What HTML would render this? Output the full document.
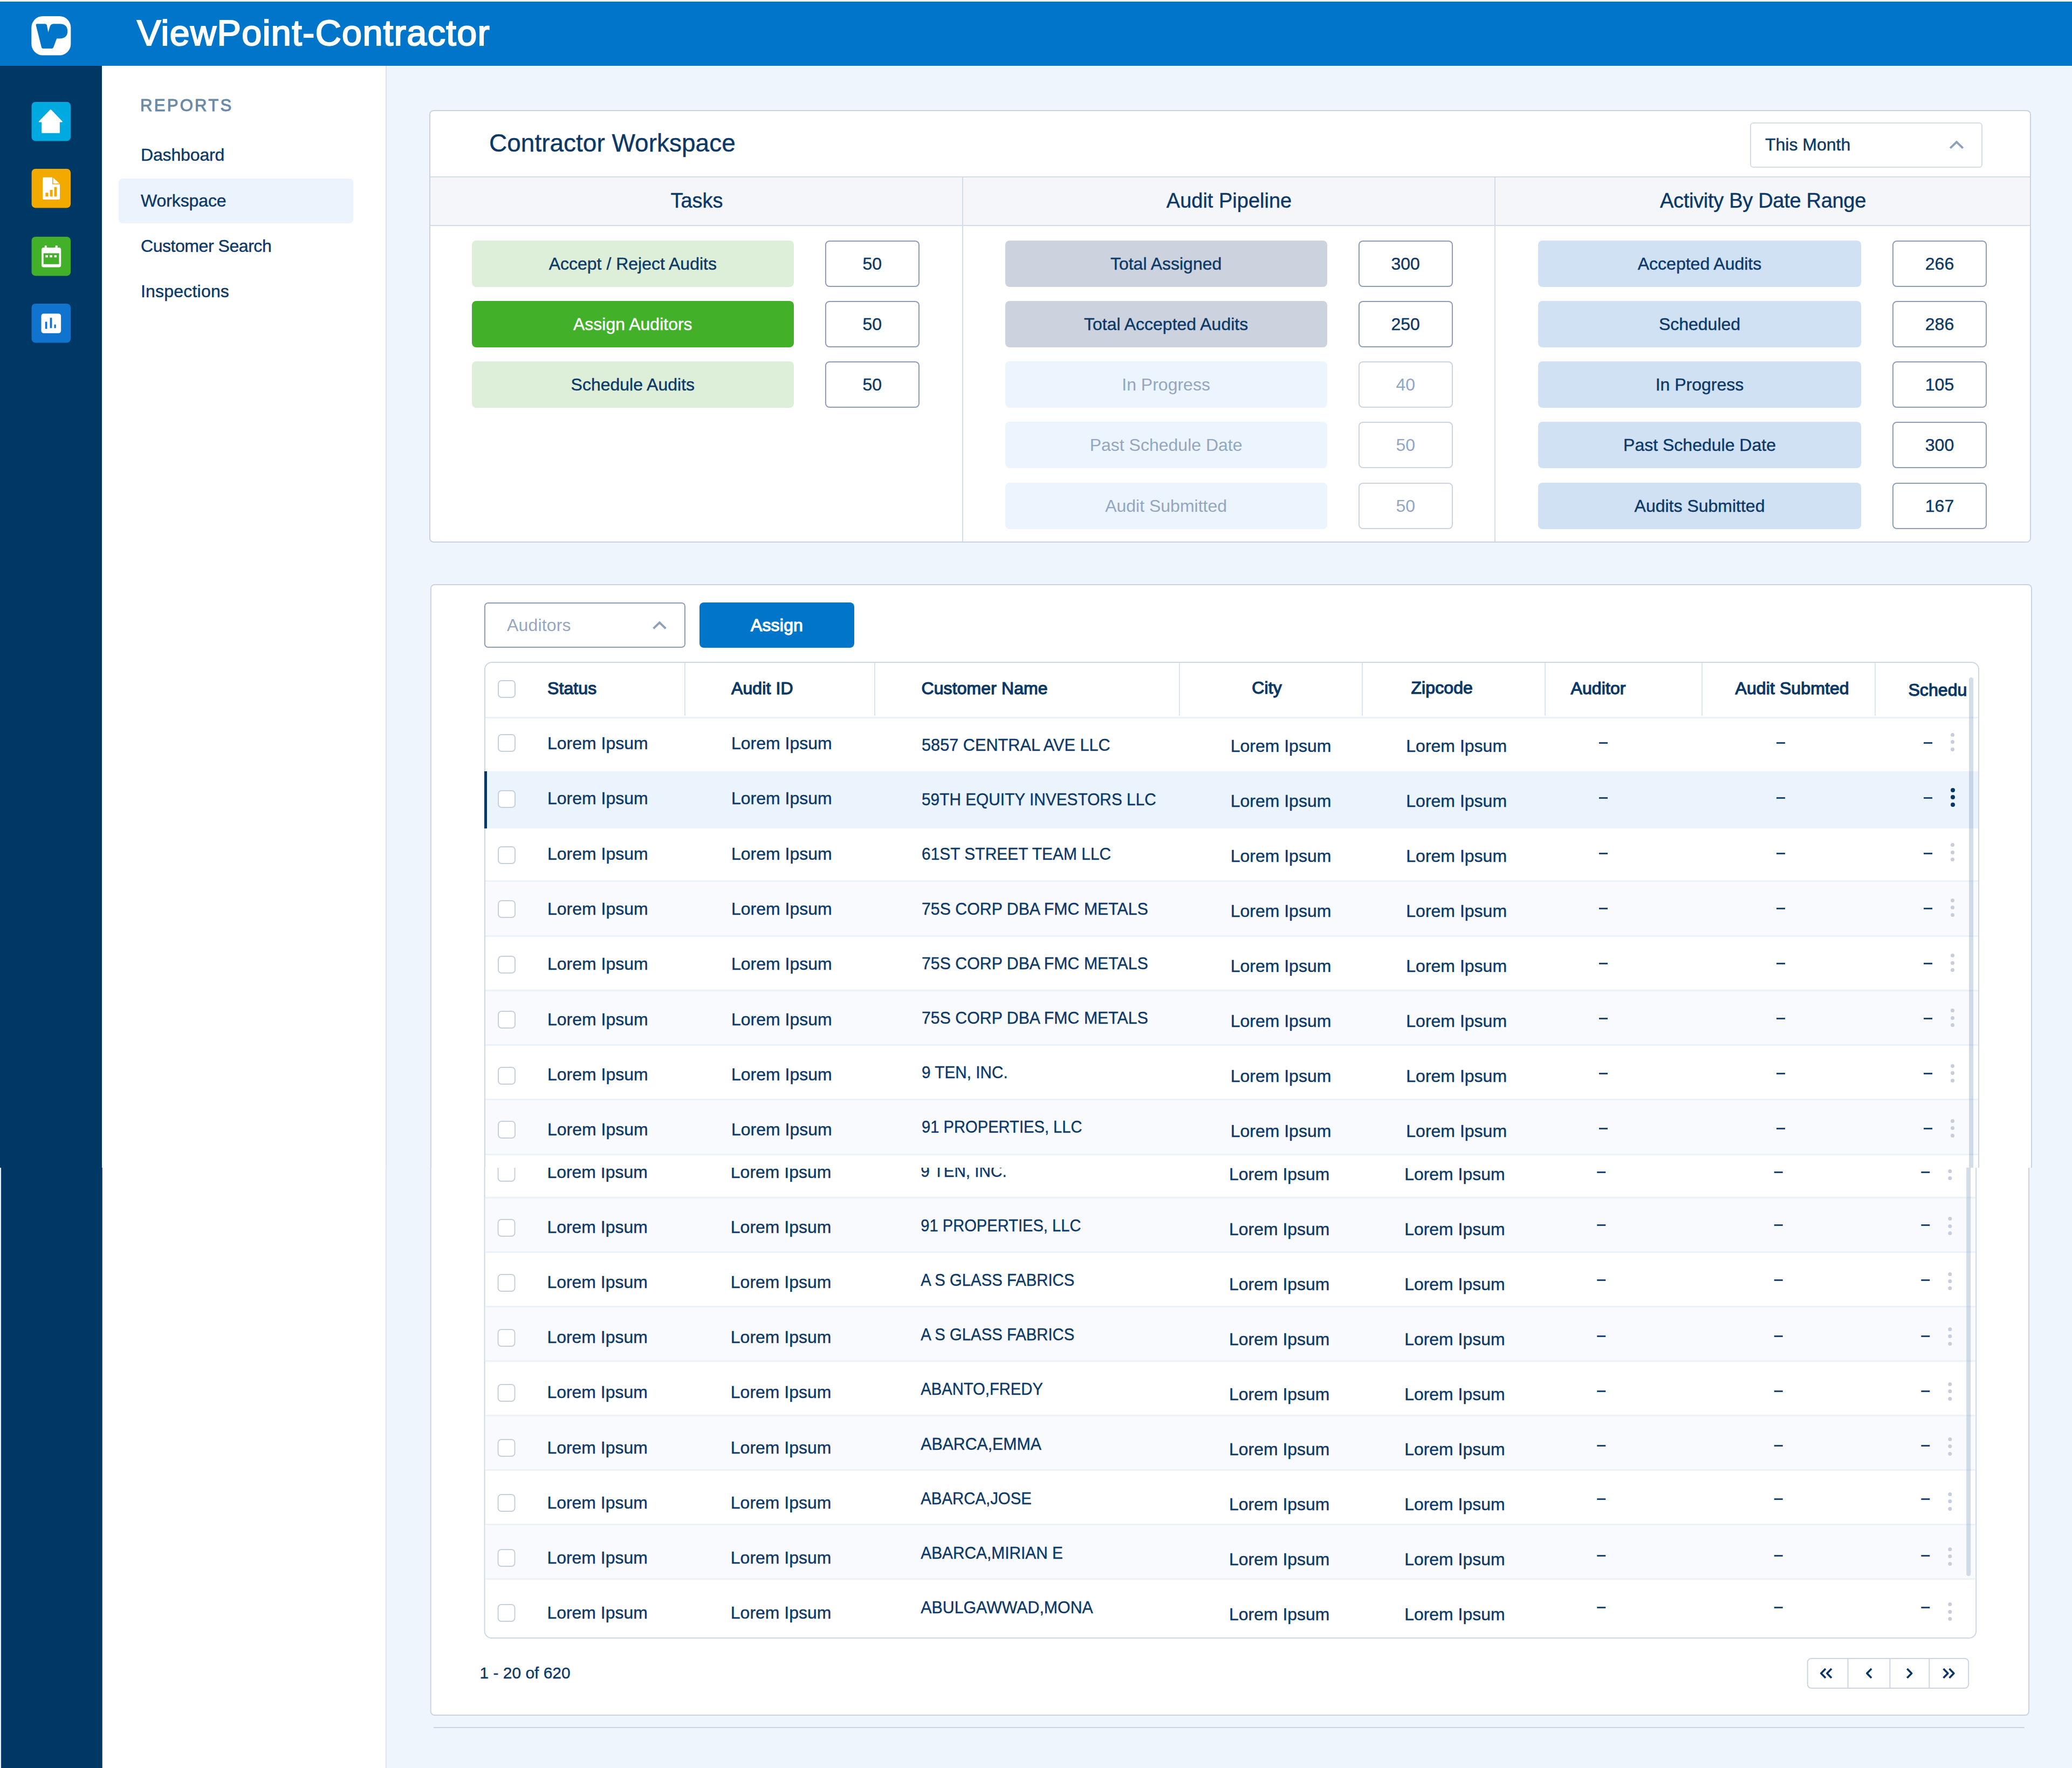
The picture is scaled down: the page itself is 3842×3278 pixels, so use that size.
<!DOCTYPE html>
<html lang="en"><head><meta charset="utf-8">
<title>ViewPoint-Contractor</title>
<style>
html,body{margin:0;padding:0;}
body{width:3842px;height:3278px;background:#eef5fd;font-family:"Liberation Sans",sans-serif;color:#0b3866;}
#root{position:relative;left:0;top:0;width:3842px;height:3278px;overflow:hidden;background:#eef5fd;}
div,svg{position:absolute;box-sizing:border-box;}
.t{white-space:nowrap;-webkit-text-stroke:0.4px;}
.sec{left:0;width:3842px;overflow:hidden;}
.card{background:#fff;border:2px solid #c9d4e0;border-radius:8px;}
.btn{-webkit-text-stroke:0.4px;border-radius:8px;font-size:32px;text-align:center;line-height:86px;height:86px;white-space:nowrap;}
.num{-webkit-text-stroke:0.4px;border:2px solid #8c9dba;border-radius:8px;background:#fff;font-size:32px;text-align:center;line-height:82px;height:86px;white-space:nowrap;}
.num.f{border-color:#ccd4e1;color:#93a6bf;-webkit-text-stroke:0;}
.cb{width:33px;height:33px;border:2px solid #c6cfdc;border-radius:7px;background:#fff;}
.sep{width:2px;background:#d9e6f5;}
.rl{height:3px;background:#ebf2fa;}
.dash{width:16px;height:3px;background:#1d4674;}
.kb{width:8px;height:8px;border-radius:50%;background:#c6cddb;}
.kb.d{background:#0b3663;}
</style></head><body><div id="root">

<div class="sec" style="top:0;height:2165px;">
<div style="left:0px;top:0px;width:3842px;height:3px;background:#f4eef1;"></div>
<div style="left:0px;top:3px;width:3842px;height:119px;background:#0075c9;"></div>
<div style="left:0px;top:122px;width:189px;height:2043px;background:#003865;"></div>
<div style="left:189px;top:122px;width:528px;height:2043px;background:#fff;border-right:2px solid #dbe4ef;"></div>
<svg style="left:58px;top:30px;" width="74" height="73" viewBox="58 30 74 73">
<rect x="58.3" y="30" width="73" height="72.5" rx="21" ry="21" fill="#fff"/>
<path fill="#0075c9" d="M66.8 47.2 Q66 44.2 69.2 44.2 L83.6 44.2 Q86.3 44.2 86.9 46.8 L89.4 60 L92.6 49 Q94.2 44.2 99.5 44.2 L110.5 44.2 Q125.2 44.2 125.2 57.8 Q125.2 71.4 110.5 71.4 L105.2 71.4 L99.3 87.2 Q98.3 90 95.3 90 L80.3 90 Q77.6 90 76.8 87.2 Z"/>
</svg>
<div class="t" style="top:20.5px;line-height:80px;height:80px;font-size:66.5px;color:#fff;left:254px;letter-spacing:1.4px;-webkit-text-stroke:2.2px #fff;">ViewPoint-Contractor</div>
<svg style="left:58px;top:189px;" width="74" height="73" viewBox="0 0 74 73"><rect x="0.6" y="0" width="72.4" height="72.4" rx="7" fill="#00a9e0"/><path fill="#fff" d="M36 14.6 L57 36.6 L52 36.6 L52 57 L19.9 57 L19.9 36.6 L14.6 36.6 Z" stroke="#fff" stroke-width="1.6" stroke-linejoin="round"/></svg>
<svg style="left:58px;top:313px;" width="74" height="73" viewBox="0 0 74 73"><rect x="0.6" y="0" width="72.4" height="72.4" rx="7" fill="#f2a900"/><path fill="#fff" d="M23 15.7 L39 15.7 L39 28.7 L53 28.7 L53 55 Q53 57 51 57 L23 57 Q21.2 57 21.2 55 L21.2 17.7 Q21.2 15.7 23 15.7 Z"/><path fill="#fff" d="M40.6 16.4 L52.3 27.2 L40.6 27.2 Z"/><rect x="26.4" y="44.4" width="5.1" height="7" fill="#f2a900"/><rect x="34.6" y="39.1" width="5" height="12.3" fill="#f2a900"/><rect x="42.5" y="33.9" width="4.9" height="17.5" fill="#f2a900"/></svg>
<svg style="left:58px;top:439px;" width="74" height="73" viewBox="0 0 74 73"><rect x="0.6" y="0" width="72.4" height="72.4" rx="7" fill="#43b02a"/><rect x="19" y="20" width="36.2" height="36.4" rx="4" fill="#fff"/><rect x="24.8" y="16.3" width="3.8" height="7" rx="1" fill="#fff"/><rect x="44.6" y="16.3" width="4.2" height="7" rx="1" fill="#fff"/><rect x="22.7" y="30.5" width="28.8" height="20.3" fill="#43b02a"/><rect x="26.4" y="34" width="4.6" height="4.2" fill="#fff"/><rect x="34.2" y="34" width="4.6" height="4.2" fill="#fff"/><rect x="42.5" y="34" width="4.6" height="4.2" fill="#fff"/></svg>
<svg style="left:58px;top:563px;" width="74" height="73" viewBox="0 0 74 73"><rect x="0.6" y="0" width="72.4" height="72.4" rx="7" fill="#1074cf"/><rect x="18.5" y="18.4" width="36.6" height="36.4" rx="4.5" fill="#fff"/><rect x="25.8" y="33.5" width="3.6" height="13.2" fill="#1074cf"/><rect x="34.6" y="26.2" width="3.8" height="19.2" fill="#1074cf"/><rect x="42.5" y="38.7" width="3.2" height="6.7" fill="#1074cf"/></svg>
<div class="t" style="top:173.5px;line-height:44px;height:44px;font-size:31px;color:#6989a7;left:260px;letter-spacing:3.3px;-webkit-text-stroke:1px #6989a7;">REPORTS</div>
<div style="left:220px;top:331px;width:435px;height:83px;background:#ebf3fc;border-radius:7px;"></div>
<div class="t" style="top:265.2px;line-height:44px;height:44px;font-size:32px;left:261px;letter-spacing:-0.15px;">Dashboard</div>
<div class="t" style="top:349.7px;line-height:44px;height:44px;font-size:32px;left:261px;letter-spacing:-0.1px;">Workspace</div>
<div class="t" style="top:433.7px;line-height:44px;height:44px;font-size:32px;left:261px;letter-spacing:-0.45px;">Customer Search</div>
<div class="t" style="top:517.6px;line-height:44px;height:44px;font-size:32px;left:261px;letter-spacing:0.2px;">Inspections</div>
<div class="card" style="left:796px;top:204px;width:2970px;height:802px;"></div>
<div style="left:798px;top:327px;width:2966px;height:92px;background:#f4f6fa;border-top:2px solid #d4dce6;border-bottom:2px solid #d4dce6;"></div>
<div style="left:1784px;top:328px;width:2px;height:676px;background:#d4dce6;"></div>
<div style="left:2771px;top:328px;width:2px;height:676px;background:#d4dce6;"></div>
<div class="t" style="top:235px;line-height:60px;height:60px;font-size:46px;left:907px;letter-spacing:0px;">Contractor Workspace</div>
<div style="left:3245px;top:227px;width:431px;height:84px;border:2px solid #d5dde8;border-radius:6px;background:#fff;"></div>
<div class="t" style="top:246px;line-height:44px;height:44px;font-size:32px;left:3273px;">This Month</div>
<svg style="left:3611px;top:257px;" width="34" height="22" viewBox="0 0 34 22"><path d="M5.2 17.6 L17 6.3 L28.8 17.6" fill="none" stroke="#8fa0b8" stroke-width="4"/></svg>
<div class="t" style="top:347px;line-height:50px;height:50px;font-size:38px;left:892px;width:800px;text-align:center;letter-spacing:0px;">Tasks</div>
<div class="t" style="top:347px;line-height:50px;height:50px;font-size:38px;left:1879px;width:800px;text-align:center;letter-spacing:0px;">Audit Pipeline</div>
<div class="t" style="top:347px;line-height:50px;height:50px;font-size:38px;left:2869px;width:800px;text-align:center;letter-spacing:-0.3px;">Activity By Date Range</div>
<div class="btn" style="left:874.8px;top:445.5px;width:597px;height:86px;background:#ddefd8;">Accept / Reject Audits</div>
<div class="num" style="left:1529.8px;top:445.5px;width:175px;height:86px;">50</div>
<div class="btn" style="left:874.8px;top:557.7px;width:597px;height:86px;background:#43b02a;color:#fff;">Assign Auditors</div>
<div class="num" style="left:1529.8px;top:557.7px;width:175px;height:86px;">50</div>
<div class="btn" style="left:874.8px;top:669.8px;width:597px;height:86px;background:#ddefd8;">Schedule Audits</div>
<div class="num" style="left:1529.8px;top:669.8px;width:175px;height:86px;">50</div>
<div class="btn" style="left:1863.6px;top:445.5px;width:597px;height:86px;background:#ccd3df;">Total Assigned</div>
<div class="num" style="left:2518.7px;top:445.5px;width:175px;height:86px;">300</div>
<div class="btn" style="left:1863.6px;top:557.7px;width:597px;height:86px;background:#ccd3df;">Total Accepted Audits</div>
<div class="num" style="left:2518.7px;top:557.7px;width:175px;height:86px;">250</div>
<div class="btn" style="left:1863.6px;top:669.8px;width:597px;height:86px;background:#ecf4fd;color:#93a6bf;-webkit-text-stroke:0;">In Progress</div>
<div class="num f" style="left:2518.7px;top:669.8px;width:175px;height:86px;">40</div>
<div class="btn" style="left:1863.6px;top:782.2px;width:597px;height:86px;background:#ecf4fd;color:#93a6bf;-webkit-text-stroke:0;">Past Schedule Date</div>
<div class="num f" style="left:2518.7px;top:782.2px;width:175px;height:86px;">50</div>
<div class="btn" style="left:1863.6px;top:894.6px;width:597px;height:86px;background:#ecf4fd;color:#93a6bf;-webkit-text-stroke:0;">Audit Submitted</div>
<div class="num f" style="left:2518.7px;top:894.6px;width:175px;height:86px;">50</div>
<div class="btn" style="left:2852px;top:445.5px;width:599px;height:86px;background:#d0e1f4;">Accepted Audits</div>
<div class="num" style="left:3509px;top:445.5px;width:175px;height:86px;">266</div>
<div class="btn" style="left:2852px;top:557.7px;width:599px;height:86px;background:#d0e1f4;">Scheduled</div>
<div class="num" style="left:3509px;top:557.7px;width:175px;height:86px;">286</div>
<div class="btn" style="left:2852px;top:669.8px;width:599px;height:86px;background:#d0e1f4;">In Progress</div>
<div class="num" style="left:3509px;top:669.8px;width:175px;height:86px;">105</div>
<div class="btn" style="left:2852px;top:782.2px;width:599px;height:86px;background:#d0e1f4;">Past Schedule Date</div>
<div class="num" style="left:3509px;top:782.2px;width:175px;height:86px;">300</div>
<div class="btn" style="left:2852px;top:894.6px;width:599px;height:86px;background:#d0e1f4;">Audits Submitted</div>
<div class="num" style="left:3509px;top:894.6px;width:175px;height:86px;">167</div>
<div class="card" style="left:798px;top:1083px;width:2970px;height:1400px;"></div>
<div style="left:898px;top:1117px;width:373px;height:84px;border:2px solid #8c9dba;border-radius:7px;background:#fff;"></div>
<div class="t" style="top:1136.5px;line-height:44px;height:44px;font-size:32px;color:#95a7c0;left:940px;-webkit-text-stroke:0;letter-spacing:0.15px;">Auditors</div>
<svg style="left:1206px;top:1148px;" width="34" height="22" viewBox="0 0 34 22"><path d="M5.6 17.4 L17 6.4 L28.4 17.4" fill="none" stroke="#8fa0b8" stroke-width="4"/></svg>
<div style="left:1297px;top:1116.5px;width:287px;height:84px;background:#0075c9;border-radius:8px;color:#fff;font-size:32px;letter-spacing:0.2px;-webkit-text-stroke:1.25px #fff;text-align:center;line-height:84px;">Assign</div>
<div style="left:898px;top:1226.5px;width:2772px;height:1900px;border:2px solid #cdd8e5;border-radius:14px;background:#fff;"></div>
<div class="cb" style="left:923px;top:1260.5px;width:33px;height:33px;"></div>
<div class="t" style="top:1253.5px;line-height:44px;height:44px;font-size:32px;left:1015px;letter-spacing:0.1px;-webkit-text-stroke:1.25px;">Status</div>
<div class="t" style="top:1253.5px;line-height:44px;height:44px;font-size:32px;left:1356px;letter-spacing:0.1px;-webkit-text-stroke:1.25px;">Audit ID</div>
<div class="t" style="top:1253.5px;line-height:44px;height:44px;font-size:32px;left:1708.5px;letter-spacing:0.1px;-webkit-text-stroke:1.25px;">Customer Name</div>
<div class="t" style="top:1252.5px;line-height:44px;height:44px;font-size:32px;left:2199px;width:300px;text-align:center;letter-spacing:0.1px;-webkit-text-stroke:1.25px;">City</div>
<div class="t" style="top:1252.5px;line-height:44px;height:44px;font-size:32px;left:2523.7px;width:300px;text-align:center;letter-spacing:0.1px;-webkit-text-stroke:1.25px;">Zipcode</div>
<div class="t" style="top:1253.5px;line-height:44px;height:44px;font-size:32px;left:2912.5px;letter-spacing:0.1px;-webkit-text-stroke:1.25px;">Auditor</div>
<div class="t" style="top:1253.5px;line-height:44px;height:44px;font-size:32px;left:3217.5px;letter-spacing:0.1px;-webkit-text-stroke:1.25px;">Audit Submted</div>
<div class="t" style="top:1256.5px;line-height:44px;height:44px;font-size:32px;left:3538.4px;letter-spacing:0.1px;-webkit-text-stroke:1.25px;">Schedu</div>
<div class="sep" style="left:1269px;top:1228.5px;width:2px;height:98px;"></div>
<div class="sep" style="left:1620.5px;top:1228.5px;width:2px;height:98px;"></div>
<div class="sep" style="left:2185.7px;top:1228.5px;width:2px;height:98px;"></div>
<div class="sep" style="left:2525px;top:1228.5px;width:2px;height:98px;"></div>
<div class="sep" style="left:2864px;top:1228.5px;width:2px;height:98px;"></div>
<div class="sep" style="left:3154.7px;top:1228.5px;width:2px;height:98px;"></div>
<div class="sep" style="left:3475.6px;top:1228.5px;width:2px;height:98px;"></div>
<div class="rl" style="left:900px;top:1329px;width:2768px;height:3px;"></div>

<div class="rl" style="left:900px;top:1429.75px;width:2768px;height:3px;"></div>
<div style="left:900px;top:1429.75px;width:2768px;height:105.75px;background:#ebf3fc;"></div><div style="left:898px;top:1429.75px;width:4.5px;height:105.75px;background:#0b3663;"></div>

<div class="rl" style="left:900px;top:1632.25px;width:2768px;height:3px;"></div>
<div style="left:900px;top:1635.25px;width:2768px;height:98.25px;background:#f9fafd;"></div>
<div class="rl" style="left:900px;top:1733.5px;width:2768px;height:3px;"></div>

<div class="rl" style="left:900px;top:1834.75px;width:2768px;height:3px;"></div>
<div style="left:900px;top:1837.75px;width:2768px;height:98.25px;background:#f9fafd;"></div>
<div class="rl" style="left:900px;top:1936px;width:2768px;height:3px;"></div>

<div class="rl" style="left:900px;top:2037.25px;width:2768px;height:3px;"></div>
<div style="left:900px;top:2040.25px;width:2768px;height:98.25px;background:#f9fafd;"></div>
<div class="rl" style="left:900px;top:2138.5px;width:2768px;height:3px;"></div>
<div class="cb" style="left:923px;top:1360.7px;width:33px;height:33px;"></div><div class="t" style="top:1356px;line-height:44px;height:44px;font-size:32px;left:1015px;">Lorem Ipsum</div><div class="t" style="top:1356px;line-height:44px;height:44px;font-size:32px;left:1356px;">Lorem Ipsum</div><div class="t" style="top:1359px;line-height:44px;height:44px;font-size:32px;left:1708.5px;transform:scaleX(0.959);transform-origin:0 50%;">5857 CENTRAL AVE LLC</div><div class="t" style="top:1360.6px;line-height:44px;height:44px;font-size:32px;left:2175px;width:400px;text-align:center;">Lorem Ipsum</div><div class="t" style="top:1360.6px;line-height:44px;height:44px;font-size:32px;left:2500.7px;width:400px;text-align:center;">Lorem Ipsum</div><div class="dash" style="left:2965px;top:1376px;width:16px;height:3px;"></div><div class="dash" style="left:3294px;top:1376px;width:16px;height:3px;"></div><div class="dash" style="left:3567px;top:1376px;width:16px;height:3px;"></div><div class="kb" style="left:3617px;top:1359px;width:7.4px;height:7.4px;"></div><div class="kb" style="left:3617px;top:1372px;width:7.4px;height:7.4px;"></div><div class="kb" style="left:3617px;top:1386px;width:7.4px;height:7.4px;"></div>
<div class="cb" style="left:923px;top:1465px;width:33px;height:33px;"></div><div class="t" style="top:1458.3px;line-height:44px;height:44px;font-size:32px;left:1015px;">Lorem Ipsum</div><div class="t" style="top:1458.3px;line-height:44px;height:44px;font-size:32px;left:1356px;">Lorem Ipsum</div><div class="t" style="top:1460.2px;line-height:44px;height:44px;font-size:32px;left:1708.5px;transform:scaleX(0.932);transform-origin:0 50%;">59TH EQUITY INVESTORS LLC</div><div class="t" style="top:1462.7px;line-height:44px;height:44px;font-size:32px;left:2175px;width:400px;text-align:center;">Lorem Ipsum</div><div class="t" style="top:1462.7px;line-height:44px;height:44px;font-size:32px;left:2500.7px;width:400px;text-align:center;">Lorem Ipsum</div><div class="dash" style="left:2965px;top:1478px;width:16px;height:3px;"></div><div class="dash" style="left:3294px;top:1478px;width:16px;height:3px;"></div><div class="dash" style="left:3567px;top:1478px;width:16px;height:3px;"></div><div class="kb d" style="left:3617px;top:1461px;width:8px;height:8px;"></div><div class="kb d" style="left:3617px;top:1474px;width:8px;height:8px;"></div><div class="kb d" style="left:3617px;top:1488px;width:8px;height:8px;"></div>
<div class="cb" style="left:923px;top:1569.2px;width:33px;height:33px;"></div><div class="t" style="top:1560.6px;line-height:44px;height:44px;font-size:32px;left:1015px;">Lorem Ipsum</div><div class="t" style="top:1560.6px;line-height:44px;height:44px;font-size:32px;left:1356px;">Lorem Ipsum</div><div class="t" style="top:1561.4px;line-height:44px;height:44px;font-size:32px;left:1708.5px;transform:scaleX(0.936);transform-origin:0 50%;">61ST STREET TEAM LLC</div><div class="t" style="top:1564.8px;line-height:44px;height:44px;font-size:32px;left:2175px;width:400px;text-align:center;">Lorem Ipsum</div><div class="t" style="top:1564.8px;line-height:44px;height:44px;font-size:32px;left:2500.7px;width:400px;text-align:center;">Lorem Ipsum</div><div class="dash" style="left:2965px;top:1581px;width:16px;height:3px;"></div><div class="dash" style="left:3294px;top:1581px;width:16px;height:3px;"></div><div class="dash" style="left:3567px;top:1581px;width:16px;height:3px;"></div><div class="kb" style="left:3617px;top:1563px;width:7.4px;height:7.4px;"></div><div class="kb" style="left:3617px;top:1577px;width:7.4px;height:7.4px;"></div><div class="kb" style="left:3617px;top:1590px;width:7.4px;height:7.4px;"></div>
<div class="cb" style="left:923px;top:1669.4px;width:33px;height:33px;"></div><div class="t" style="top:1662.9px;line-height:44px;height:44px;font-size:32px;left:1015px;">Lorem Ipsum</div><div class="t" style="top:1662.9px;line-height:44px;height:44px;font-size:32px;left:1356px;">Lorem Ipsum</div><div class="t" style="top:1662.6px;line-height:44px;height:44px;font-size:32px;left:1708.5px;transform:scaleX(0.947);transform-origin:0 50%;">75S CORP DBA FMC METALS</div><div class="t" style="top:1666.9px;line-height:44px;height:44px;font-size:32px;left:2175px;width:400px;text-align:center;">Lorem Ipsum</div><div class="t" style="top:1666.9px;line-height:44px;height:44px;font-size:32px;left:2500.7px;width:400px;text-align:center;">Lorem Ipsum</div><div class="dash" style="left:2965px;top:1683px;width:16px;height:3px;"></div><div class="dash" style="left:3294px;top:1683px;width:16px;height:3px;"></div><div class="dash" style="left:3567px;top:1683px;width:16px;height:3px;"></div><div class="kb" style="left:3617px;top:1666px;width:7.4px;height:7.4px;"></div><div class="kb" style="left:3617px;top:1679px;width:7.4px;height:7.4px;"></div><div class="kb" style="left:3617px;top:1693px;width:7.4px;height:7.4px;"></div>
<div class="cb" style="left:923px;top:1771.9px;width:33px;height:33px;"></div><div class="t" style="top:1765.2px;line-height:44px;height:44px;font-size:32px;left:1015px;">Lorem Ipsum</div><div class="t" style="top:1765.2px;line-height:44px;height:44px;font-size:32px;left:1356px;">Lorem Ipsum</div><div class="t" style="top:1763.8px;line-height:44px;height:44px;font-size:32px;left:1708.5px;transform:scaleX(0.947);transform-origin:0 50%;">75S CORP DBA FMC METALS</div><div class="t" style="top:1769px;line-height:44px;height:44px;font-size:32px;left:2175px;width:400px;text-align:center;">Lorem Ipsum</div><div class="t" style="top:1769px;line-height:44px;height:44px;font-size:32px;left:2500.7px;width:400px;text-align:center;">Lorem Ipsum</div><div class="dash" style="left:2965px;top:1785px;width:16px;height:3px;"></div><div class="dash" style="left:3294px;top:1785px;width:16px;height:3px;"></div><div class="dash" style="left:3567px;top:1785px;width:16px;height:3px;"></div><div class="kb" style="left:3617px;top:1768px;width:7.4px;height:7.4px;"></div><div class="kb" style="left:3617px;top:1782px;width:7.4px;height:7.4px;"></div><div class="kb" style="left:3617px;top:1795px;width:7.4px;height:7.4px;"></div>
<div class="cb" style="left:923px;top:1873.9px;width:33px;height:33px;"></div><div class="t" style="top:1867.5px;line-height:44px;height:44px;font-size:32px;left:1015px;">Lorem Ipsum</div><div class="t" style="top:1867.5px;line-height:44px;height:44px;font-size:32px;left:1356px;">Lorem Ipsum</div><div class="t" style="top:1865px;line-height:44px;height:44px;font-size:32px;left:1708.5px;transform:scaleX(0.947);transform-origin:0 50%;">75S CORP DBA FMC METALS</div><div class="t" style="top:1871.1px;line-height:44px;height:44px;font-size:32px;left:2175px;width:400px;text-align:center;">Lorem Ipsum</div><div class="t" style="top:1871.1px;line-height:44px;height:44px;font-size:32px;left:2500.7px;width:400px;text-align:center;">Lorem Ipsum</div><div class="dash" style="left:2965px;top:1887px;width:16px;height:3px;"></div><div class="dash" style="left:3294px;top:1887px;width:16px;height:3px;"></div><div class="dash" style="left:3567px;top:1887px;width:16px;height:3px;"></div><div class="kb" style="left:3617px;top:1870px;width:7.4px;height:7.4px;"></div><div class="kb" style="left:3617px;top:1884px;width:7.4px;height:7.4px;"></div><div class="kb" style="left:3617px;top:1897px;width:7.4px;height:7.4px;"></div>
<div class="cb" style="left:923px;top:1978.1px;width:33px;height:33px;"></div><div class="t" style="top:1969.8px;line-height:44px;height:44px;font-size:32px;left:1015px;">Lorem Ipsum</div><div class="t" style="top:1969.8px;line-height:44px;height:44px;font-size:32px;left:1356px;">Lorem Ipsum</div><div class="t" style="top:1966.2px;line-height:44px;height:44px;font-size:32px;left:1708.5px;transform:scaleX(0.929);transform-origin:0 50%;">9 TEN, INC.</div><div class="t" style="top:1973.2px;line-height:44px;height:44px;font-size:32px;left:2175px;width:400px;text-align:center;">Lorem Ipsum</div><div class="t" style="top:1973.2px;line-height:44px;height:44px;font-size:32px;left:2500.7px;width:400px;text-align:center;">Lorem Ipsum</div><div class="dash" style="left:2965px;top:1989px;width:16px;height:3px;"></div><div class="dash" style="left:3294px;top:1989px;width:16px;height:3px;"></div><div class="dash" style="left:3567px;top:1989px;width:16px;height:3px;"></div><div class="kb" style="left:3617px;top:1973px;width:7.4px;height:7.4px;"></div><div class="kb" style="left:3617px;top:1986px;width:7.4px;height:7.4px;"></div><div class="kb" style="left:3617px;top:2000px;width:7.4px;height:7.4px;"></div>
<div class="cb" style="left:923px;top:2078.3px;width:33px;height:33px;"></div><div class="t" style="top:2072.1px;line-height:44px;height:44px;font-size:32px;left:1015px;">Lorem Ipsum</div><div class="t" style="top:2072.1px;line-height:44px;height:44px;font-size:32px;left:1356px;">Lorem Ipsum</div><div class="t" style="top:2067.4px;line-height:44px;height:44px;font-size:32px;left:1708.5px;transform:scaleX(0.911);transform-origin:0 50%;">91 PROPERTIES, LLC</div><div class="t" style="top:2075.3px;line-height:44px;height:44px;font-size:32px;left:2175px;width:400px;text-align:center;">Lorem Ipsum</div><div class="t" style="top:2075.3px;line-height:44px;height:44px;font-size:32px;left:2500.7px;width:400px;text-align:center;">Lorem Ipsum</div><div class="dash" style="left:2965px;top:2091px;width:16px;height:3px;"></div><div class="dash" style="left:3294px;top:2091px;width:16px;height:3px;"></div><div class="dash" style="left:3567px;top:2091px;width:16px;height:3px;"></div><div class="kb" style="left:3617px;top:2075px;width:7.4px;height:7.4px;"></div><div class="kb" style="left:3617px;top:2088px;width:7.4px;height:7.4px;"></div><div class="kb" style="left:3617px;top:2102px;width:7.4px;height:7.4px;"></div>
<div style="left:3650.9px;top:1255.5px;width:8.2px;height:1000px;background:rgba(140,165,195,.38);border-radius:4px;"></div>
</div>
<div class="sec" style="top:2165px;height:1113px;">
<div style="left:0;top:-2165px;width:3842px;height:3278px;transform-origin:638px 0;transform:scaleX(0.9984);">
<div style="left:-5px;top:2155px;width:195px;height:1200px;background:#003865;"></div>
<div style="left:-5px;top:2155px;width:5.9px;height:1200px;background:#e8eef5;"></div>
<div style="left:189px;top:2155px;width:528px;height:1200px;background:#fff;border-right:2px solid #dbe4ef;"></div>
<div class="card" style="left:798px;top:1083px;width:2970px;height:2098px;"></div>
<div style="left:898px;top:1226.5px;width:2772px;height:1811px;border:2px solid #cdd8e5;border-radius:14px;background:#fff;"></div>

<div class="rl" style="left:900px;top:2218.8px;width:2768px;height:3px;"></div>
<div style="left:900px;top:2221.8px;width:2768px;height:98px;background:#f9fafd;"></div>
<div class="rl" style="left:900px;top:2319.8px;width:2768px;height:3px;"></div>

<div class="rl" style="left:900px;top:2420.8px;width:2768px;height:3px;"></div>
<div style="left:900px;top:2423.8px;width:2768px;height:98px;background:#f9fafd;"></div>
<div class="rl" style="left:900px;top:2521.8px;width:2768px;height:3px;"></div>

<div class="rl" style="left:900px;top:2622.8px;width:2768px;height:3px;"></div>
<div style="left:900px;top:2625.8px;width:2768px;height:98px;background:#f9fafd;"></div>
<div class="rl" style="left:900px;top:2723.8px;width:2768px;height:3px;"></div>

<div class="rl" style="left:900px;top:2824.8px;width:2768px;height:3px;"></div>
<div style="left:900px;top:2827.8px;width:2768px;height:98px;background:#f9fafd;"></div>
<div class="rl" style="left:900px;top:2925.8px;width:2768px;height:3px;"></div>

<div class="cb" style="left:923px;top:2158px;width:33px;height:33px;"></div><div class="t" style="top:2151px;line-height:44px;height:44px;font-size:32px;left:1015px;">Lorem Ipsum</div><div class="t" style="top:2151px;line-height:44px;height:44px;font-size:32px;left:1356px;">Lorem Ipsum</div><div class="t" style="top:2149px;line-height:44px;height:44px;font-size:32px;left:1708.5px;transform:scaleX(0.929);transform-origin:0 50%;">9 TEN, INC.</div><div class="t" style="top:2154.6px;line-height:44px;height:44px;font-size:32px;left:2175px;width:400px;text-align:center;">Lorem Ipsum</div><div class="t" style="top:2154.6px;line-height:44px;height:44px;font-size:32px;left:2500.7px;width:400px;text-align:center;">Lorem Ipsum</div><div class="dash" style="left:2965px;top:2172px;width:16px;height:3px;"></div><div class="dash" style="left:3294px;top:2172px;width:16px;height:3px;"></div><div class="dash" style="left:3567px;top:2172px;width:16px;height:3px;"></div><div class="kb" style="left:3617px;top:2154px;width:7.4px;height:7.4px;"></div><div class="kb" style="left:3617px;top:2168px;width:7.4px;height:7.4px;"></div><div class="kb" style="left:3617px;top:2181px;width:7.4px;height:7.4px;"></div>
<div class="cb" style="left:923px;top:2260px;width:33px;height:33px;"></div><div class="t" style="top:2253.1px;line-height:44px;height:44px;font-size:32px;left:1015px;">Lorem Ipsum</div><div class="t" style="top:2253.1px;line-height:44px;height:44px;font-size:32px;left:1356px;">Lorem Ipsum</div><div class="t" style="top:2250.1px;line-height:44px;height:44px;font-size:32px;left:1708.5px;transform:scaleX(0.911);transform-origin:0 50%;">91 PROPERTIES, LLC</div><div class="t" style="top:2256.6px;line-height:44px;height:44px;font-size:32px;left:2175px;width:400px;text-align:center;">Lorem Ipsum</div><div class="t" style="top:2256.6px;line-height:44px;height:44px;font-size:32px;left:2500.7px;width:400px;text-align:center;">Lorem Ipsum</div><div class="dash" style="left:2965px;top:2270px;width:16px;height:3px;"></div><div class="dash" style="left:3294px;top:2270px;width:16px;height:3px;"></div><div class="dash" style="left:3567px;top:2270px;width:16px;height:3px;"></div><div class="kb" style="left:3617px;top:2256px;width:7.4px;height:7.4px;"></div><div class="kb" style="left:3617px;top:2270px;width:7.4px;height:7.4px;"></div><div class="kb" style="left:3617px;top:2283px;width:7.4px;height:7.4px;"></div>
<div class="cb" style="left:923px;top:2362px;width:33px;height:33px;"></div><div class="t" style="top:2355.2px;line-height:44px;height:44px;font-size:32px;left:1015px;">Lorem Ipsum</div><div class="t" style="top:2355.2px;line-height:44px;height:44px;font-size:32px;left:1356px;">Lorem Ipsum</div><div class="t" style="top:2351.2px;line-height:44px;height:44px;font-size:32px;left:1708.5px;transform:scaleX(0.917);transform-origin:0 50%;">A S GLASS FABRICS</div><div class="t" style="top:2358.6px;line-height:44px;height:44px;font-size:32px;left:2175px;width:400px;text-align:center;">Lorem Ipsum</div><div class="t" style="top:2358.6px;line-height:44px;height:44px;font-size:32px;left:2500.7px;width:400px;text-align:center;">Lorem Ipsum</div><div class="dash" style="left:2965px;top:2372px;width:16px;height:3px;"></div><div class="dash" style="left:3294px;top:2372px;width:16px;height:3px;"></div><div class="dash" style="left:3567px;top:2372px;width:16px;height:3px;"></div><div class="kb" style="left:3617px;top:2359px;width:7.4px;height:7.4px;"></div><div class="kb" style="left:3617px;top:2372px;width:7.4px;height:7.4px;"></div><div class="kb" style="left:3617px;top:2385px;width:7.4px;height:7.4px;"></div>
<div class="cb" style="left:923px;top:2464px;width:33px;height:33px;"></div><div class="t" style="top:2457.3px;line-height:44px;height:44px;font-size:32px;left:1015px;">Lorem Ipsum</div><div class="t" style="top:2457.3px;line-height:44px;height:44px;font-size:32px;left:1356px;">Lorem Ipsum</div><div class="t" style="top:2452.3px;line-height:44px;height:44px;font-size:32px;left:1708.5px;transform:scaleX(0.917);transform-origin:0 50%;">A S GLASS FABRICS</div><div class="t" style="top:2460.6px;line-height:44px;height:44px;font-size:32px;left:2175px;width:400px;text-align:center;">Lorem Ipsum</div><div class="t" style="top:2460.6px;line-height:44px;height:44px;font-size:32px;left:2500.7px;width:400px;text-align:center;">Lorem Ipsum</div><div class="dash" style="left:2965px;top:2476px;width:16px;height:3px;"></div><div class="dash" style="left:3294px;top:2476px;width:16px;height:3px;"></div><div class="dash" style="left:3567px;top:2476px;width:16px;height:3px;"></div><div class="kb" style="left:3617px;top:2461px;width:7.4px;height:7.4px;"></div><div class="kb" style="left:3617px;top:2474px;width:7.4px;height:7.4px;"></div><div class="kb" style="left:3617px;top:2488px;width:7.4px;height:7.4px;"></div>
<div class="cb" style="left:923px;top:2566px;width:33px;height:33px;"></div><div class="t" style="top:2559.4px;line-height:44px;height:44px;font-size:32px;left:1015px;">Lorem Ipsum</div><div class="t" style="top:2559.4px;line-height:44px;height:44px;font-size:32px;left:1356px;">Lorem Ipsum</div><div class="t" style="top:2553.4px;line-height:44px;height:44px;font-size:32px;left:1708.5px;transform:scaleX(0.914);transform-origin:0 50%;">ABANTO,FREDY</div><div class="t" style="top:2562.6px;line-height:44px;height:44px;font-size:32px;left:2175px;width:400px;text-align:center;">Lorem Ipsum</div><div class="t" style="top:2562.6px;line-height:44px;height:44px;font-size:32px;left:2500.7px;width:400px;text-align:center;">Lorem Ipsum</div><div class="dash" style="left:2965px;top:2578px;width:16px;height:3px;"></div><div class="dash" style="left:3294px;top:2578px;width:16px;height:3px;"></div><div class="dash" style="left:3567px;top:2578px;width:16px;height:3px;"></div><div class="kb" style="left:3617px;top:2563px;width:7.4px;height:7.4px;"></div><div class="kb" style="left:3617px;top:2576px;width:7.4px;height:7.4px;"></div><div class="kb" style="left:3617px;top:2590px;width:7.4px;height:7.4px;"></div>
<div class="cb" style="left:923px;top:2668px;width:33px;height:33px;"></div><div class="t" style="top:2661.5px;line-height:44px;height:44px;font-size:32px;left:1015px;">Lorem Ipsum</div><div class="t" style="top:2661.5px;line-height:44px;height:44px;font-size:32px;left:1356px;">Lorem Ipsum</div><div class="t" style="top:2654.5px;line-height:44px;height:44px;font-size:32px;left:1708.5px;transform:scaleX(0.947);transform-origin:0 50%;">ABARCA,EMMA</div><div class="t" style="top:2664.6px;line-height:44px;height:44px;font-size:32px;left:2175px;width:400px;text-align:center;">Lorem Ipsum</div><div class="t" style="top:2664.6px;line-height:44px;height:44px;font-size:32px;left:2500.7px;width:400px;text-align:center;">Lorem Ipsum</div><div class="dash" style="left:2965px;top:2679px;width:16px;height:3px;"></div><div class="dash" style="left:3294px;top:2679px;width:16px;height:3px;"></div><div class="dash" style="left:3567px;top:2679px;width:16px;height:3px;"></div><div class="kb" style="left:3617px;top:2665px;width:7.4px;height:7.4px;"></div><div class="kb" style="left:3617px;top:2678px;width:7.4px;height:7.4px;"></div><div class="kb" style="left:3617px;top:2692px;width:7.4px;height:7.4px;"></div>
<div class="cb" style="left:923px;top:2770px;width:33px;height:33px;"></div><div class="t" style="top:2763.6px;line-height:44px;height:44px;font-size:32px;left:1015px;">Lorem Ipsum</div><div class="t" style="top:2763.6px;line-height:44px;height:44px;font-size:32px;left:1356px;">Lorem Ipsum</div><div class="t" style="top:2755.6px;line-height:44px;height:44px;font-size:32px;left:1708.5px;transform:scaleX(0.919);transform-origin:0 50%;">ABARCA,JOSE</div><div class="t" style="top:2766.6px;line-height:44px;height:44px;font-size:32px;left:2175px;width:400px;text-align:center;">Lorem Ipsum</div><div class="t" style="top:2766.6px;line-height:44px;height:44px;font-size:32px;left:2500.7px;width:400px;text-align:center;">Lorem Ipsum</div><div class="dash" style="left:2965px;top:2778px;width:16px;height:3px;"></div><div class="dash" style="left:3294px;top:2778px;width:16px;height:3px;"></div><div class="dash" style="left:3567px;top:2778px;width:16px;height:3px;"></div><div class="kb" style="left:3617px;top:2767px;width:7.4px;height:7.4px;"></div><div class="kb" style="left:3617px;top:2780px;width:7.4px;height:7.4px;"></div><div class="kb" style="left:3617px;top:2794px;width:7.4px;height:7.4px;"></div>
<div class="cb" style="left:923px;top:2872px;width:33px;height:33px;"></div><div class="t" style="top:2865.7px;line-height:44px;height:44px;font-size:32px;left:1015px;">Lorem Ipsum</div><div class="t" style="top:2865.7px;line-height:44px;height:44px;font-size:32px;left:1356px;">Lorem Ipsum</div><div class="t" style="top:2856.7px;line-height:44px;height:44px;font-size:32px;left:1708.5px;transform:scaleX(0.934);transform-origin:0 50%;">ABARCA,MIRIAN E</div><div class="t" style="top:2868.6px;line-height:44px;height:44px;font-size:32px;left:2175px;width:400px;text-align:center;">Lorem Ipsum</div><div class="t" style="top:2868.6px;line-height:44px;height:44px;font-size:32px;left:2500.7px;width:400px;text-align:center;">Lorem Ipsum</div><div class="dash" style="left:2965px;top:2883px;width:16px;height:3px;"></div><div class="dash" style="left:3294px;top:2883px;width:16px;height:3px;"></div><div class="dash" style="left:3567px;top:2883px;width:16px;height:3px;"></div><div class="kb" style="left:3617px;top:2869px;width:7.4px;height:7.4px;"></div><div class="kb" style="left:3617px;top:2882px;width:7.4px;height:7.4px;"></div><div class="kb" style="left:3617px;top:2896px;width:7.4px;height:7.4px;"></div>
<div class="cb" style="left:923px;top:2974px;width:33px;height:33px;"></div><div class="t" style="top:2967.8px;line-height:44px;height:44px;font-size:32px;left:1015px;">Lorem Ipsum</div><div class="t" style="top:2967.8px;line-height:44px;height:44px;font-size:32px;left:1356px;">Lorem Ipsum</div><div class="t" style="top:2957.8px;line-height:44px;height:44px;font-size:32px;left:1708.5px;transform:scaleX(0.949);transform-origin:0 50%;">ABULGAWWAD,MONA</div><div class="t" style="top:2970.6px;line-height:44px;height:44px;font-size:32px;left:2175px;width:400px;text-align:center;">Lorem Ipsum</div><div class="t" style="top:2970.6px;line-height:44px;height:44px;font-size:32px;left:2500.7px;width:400px;text-align:center;">Lorem Ipsum</div><div class="dash" style="left:2965px;top:2979px;width:16px;height:3px;"></div><div class="dash" style="left:3294px;top:2979px;width:16px;height:3px;"></div><div class="dash" style="left:3567px;top:2979px;width:16px;height:3px;"></div><div class="kb" style="left:3617px;top:2971px;width:7.4px;height:7.4px;"></div><div class="kb" style="left:3617px;top:2985px;width:7.4px;height:7.4px;"></div><div class="kb" style="left:3617px;top:2998px;width:7.4px;height:7.4px;"></div>
<div style="left:3650.9px;top:2100px;width:8.2px;height:822px;background:rgba(140,165,195,.38);border-radius:4px;"></div>
<div class="t" style="top:3079.5px;line-height:44px;height:44px;font-size:30px;left:889.903px;">1 - 20 of 620</div>
<div style="left:3355.05px;top:3073.8px;width:300.5px;height:57px;border:2px solid #ccd5e1;border-radius:8px;background:#fff;"></div>
<div style="left:3430.47px;top:3076px;width:2px;height:54px;background:#ccd5e1;"></div>
<div style="left:3508.29px;top:3076px;width:2px;height:54px;background:#ccd5e1;"></div>
<div style="left:3581.21px;top:3076px;width:2px;height:54px;background:#ccd5e1;"></div>
<svg style="left:3340px;top:3070px;" width="340" height="70" viewBox="3340 3070 340 70"><path d="M3389.5 3094.0 L3381.1 3102.5 L3389.5 3111.0" fill="none" stroke="#0b3663" stroke-width="3.6" stroke-linejoin="round"/><path d="M3400.5 3094.0 L3392.1 3102.5 L3400.5 3111.0" fill="none" stroke="#0b3663" stroke-width="3.6" stroke-linejoin="round"/><path d="M3474.7 3094.0 L3466.3 3102.5 L3474.7 3111.0" fill="none" stroke="#0b3663" stroke-width="3.6" stroke-linejoin="round"/><path d="M3540.9 3094.0 L3549.3 3102.5 L3540.9 3111.0" fill="none" stroke="#0b3663" stroke-width="3.6" stroke-linejoin="round"/><path d="M3608.3 3094.0 L3616.7 3102.5 L3608.3 3111.0" fill="none" stroke="#0b3663" stroke-width="3.6" stroke-linejoin="round"/><path d="M3619.3 3094.0 L3627.7 3102.5 L3619.3 3111.0" fill="none" stroke="#0b3663" stroke-width="3.6" stroke-linejoin="round"/></svg>
<div style="left:804.266px;top:3202px;width:2954.73px;height:2px;background:#c9d4e0;border-radius:2px;"></div>
</div></div>
</div></body></html>
